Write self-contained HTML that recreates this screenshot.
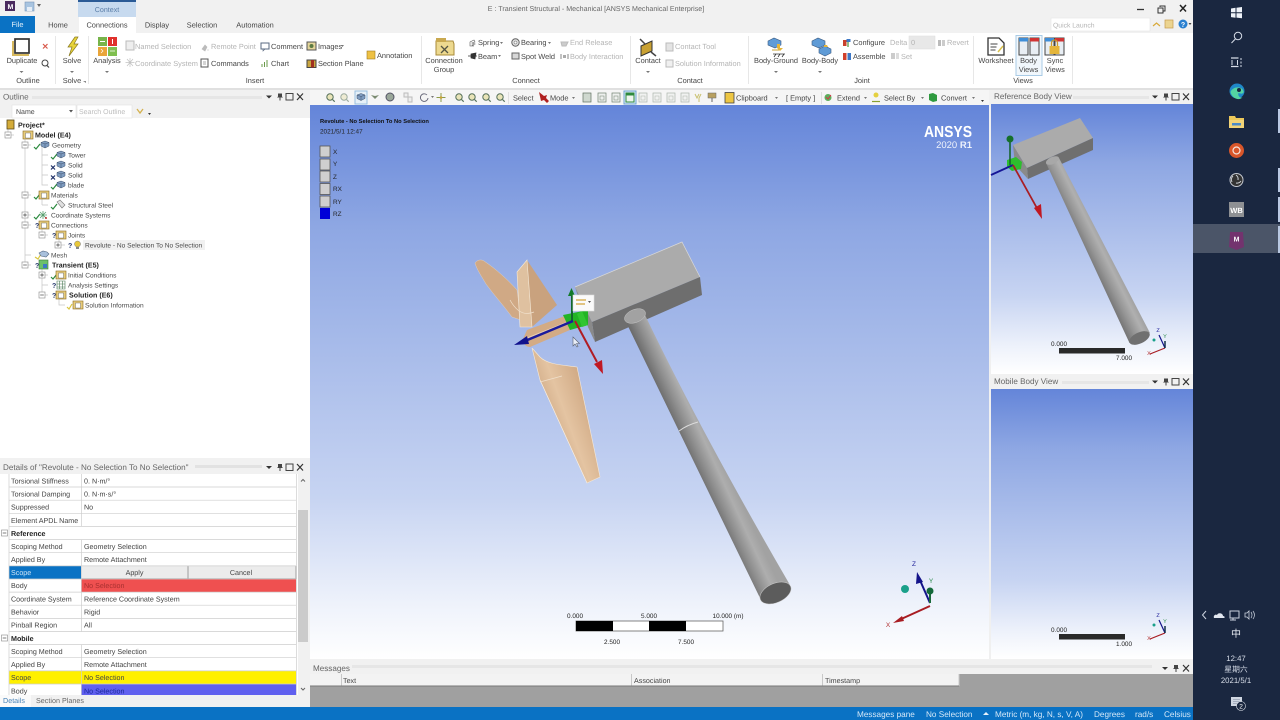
<!DOCTYPE html>
<html lang="en">
<head>
<meta charset="utf-8">
<title>E : Transient Structural - Mechanical [ANSYS Mechanical Enterprise]</title>
<style>
html,body{margin:0;padding:0;width:1280px;height:720px;overflow:hidden;background:#f0f0f0}
svg{display:block;position:absolute;left:0;top:0;filter:blur(.35px)}
text{font-family:"Liberation Sans","Noto Sans CJK SC",sans-serif;text-rendering:geometricPrecision;dominant-baseline:auto}
.r{font-size:7.4px;fill:#454545}
.g{font-size:7.4px;fill:#b4b4b4}
.c{text-anchor:middle}
.tr{font-size:6.6px;fill:#4a4a4a}
.b{font-weight:bold;fill:#222;font-size:7.1px}
.d{font-size:7.15px;fill:#444}
.h{font-size:8.1px;fill:#666}
.s{font-size:8.2px;fill:#d5e8f8}
.k{font-size:6.4px;fill:#222}
.w{fill:#fff}
</style>
</head>
<body>
<svg width="1280" height="720" viewBox="0 0 1280 720" xmlns="http://www.w3.org/2000/svg">
<defs>
<linearGradient id="vg" x1="0" y1="0" x2="0" y2="1">
<stop offset="0" stop-color="#6485d9"/><stop offset=".22" stop-color="#8ea7e3"/><stop offset=".71" stop-color="#c7d4f2"/><stop offset=".9" stop-color="#eef2fb"/><stop offset="1" stop-color="#fff"/>
</linearGradient>
<linearGradient id="cm" gradientUnits="userSpaceOnUse" x1="691" y1="461" x2="717" y2="449">
<stop offset="0" stop-color="#6c6c6c"/><stop offset=".35" stop-color="#8e8e8e"/><stop offset=".72" stop-color="#aeaeae"/><stop offset="1" stop-color="#a2a2a2"/>
</linearGradient>
<linearGradient id="cr" gradientUnits="userSpaceOnUse" x1="1086" y1="254" x2="1106" y2="244">
<stop offset="0" stop-color="#777"/><stop offset=".35" stop-color="#959595"/><stop offset=".72" stop-color="#b0b0b0"/><stop offset="1" stop-color="#a0a0a0"/>
</linearGradient>
<linearGradient id="bl" gradientUnits="userSpaceOnUse" x1="540" y1="430" x2="595" y2="410">
<stop offset="0" stop-color="#c79f79"/><stop offset=".5" stop-color="#e4c4a2"/><stop offset="1" stop-color="#cfa883"/>
</linearGradient>
<g id="bar"><path d="M-3-1h6l-3 3z" fill="#333"/><path d="M9-3h4v3l1 1h-2.500v3h-1v-3H8l1-1z" fill="#444"/><rect x="17" y="-3" width="7" height="6.500" fill="none" stroke="#444"/><path d="M28-3l6 6.500m0-6.500l-6 6.500" stroke="#333" stroke-width="1.200"/></g>
<path id="ck" d="M0 2l2 2 4-5" fill="none" stroke="#2b8a3e" stroke-width="1.200"/>
<path id="xm" d="M0 0l4 4m0-4l-4 4" fill="none" stroke="#1d2f66" stroke-width="1.200"/>
<g id="cube"><path d="M0 1.500l4-1.500 4 1.500v3.500l-4 2-4-2z" fill="#7f9cc0" stroke="#41536e" stroke-width=".5"/><path d="M0 1.500l4 1.500 4-1.500M4 3v4" fill="none" stroke="#41536e" stroke-width=".5"/></g>
<g id="fld"><rect x="0" y="1" width="10" height="8" fill="#e7cc7c" stroke="#8a6a20" stroke-width=".6"/><rect x="2.500" y="3" width="5" height="5" fill="#fff" stroke="#555" stroke-width=".4"/></g>
<g id="exp"><rect x="-3" y="-3" width="6" height="6" fill="#fff" stroke="#888" stroke-width=".6"/><path d="M-1.800 0h3.600" stroke="#444" stroke-width=".7"/></g>
<g id="exq"><rect x="-3" y="-3" width="6" height="6" fill="#fff" stroke="#888" stroke-width=".6"/><path d="M-1.800 0h3.600M0-1.800v3.600" stroke="#444" stroke-width=".7"/></g>
<g id="mag"><circle cx="4" cy="4" r="3.200" fill="#e9e4b8" stroke="#55705a" stroke-width="1"/><path d="M6.500 6.500l2.200 2.200" stroke="#55705a" stroke-width="1.200"/></g>
<g id="pg"><rect x="0" y="0" width="8" height="9" fill="#eef0ee" stroke="#70806f" stroke-width=".7"/><rect x="2" y="3" width="4" height="4" fill="none" stroke="#70806f" stroke-width=".5"/></g>
<g id="lg"><rect width="10" height="11" fill="#cfcfcf" stroke="#555" stroke-width=".8"/></g>
</defs>

<!-- title bar + tabs -->
<rect width="1193" height="33" fill="#f1f1f1"/>
<rect x="5" y="1" width="10" height="10" fill="#4a2a5e"/><text x="7.500" y="9" font-size="7" font-weight="bold" class="w">M</text>
<rect x="25" y="2" width="9" height="9" fill="#a8c4e0" stroke="#7b97b8" stroke-width=".6"/><rect x="27" y="7" width="5" height="4" fill="#e6eef7"/>
<path d="M37 4h4l-2 3z" fill="#666"/>
<text x="596" y="11" class="c" font-size="7.100" fill="#666">E : Transient Structural - Mechanical [ANSYS Mechanical Enterprise]</text>
<rect x="78" y="0" width="58" height="17" fill="#c7daef"/><rect x="78" y="0" width="58" height="2" fill="#2a5a96"/>
<text x="107" y="12" class="c" font-size="7.100" fill="#5b7ea8">Context</text>
<rect x="0" y="16" width="35" height="17" fill="#0a72c4"/><text x="17.500" y="27" class="c" font-size="7.400" fill="#e8f3fb">File</text>
<text x="58" y="27.500" class="c r">Home</text>
<rect x="79" y="17" width="57" height="17" fill="#fff"/>
<text x="107" y="27.500" class="c r">Connections</text>
<text x="157" y="27.500" class="c r">Display</text>
<text x="202" y="27.500" class="c r">Selection</text>
<text x="255" y="27.500" class="c r">Automation</text>
<path d="M1137 9.500h7" stroke="#333" stroke-width="1.300"/>
<rect x="1158" y="8" width="5" height="5" fill="none" stroke="#333"/><path d="M1160 7v-1h5v5h-1.500" fill="none" stroke="#333"/>
<path d="M1180 5l6 6.500m0-6.500l-6 6.500" stroke="#222" stroke-width="1.500"/>
<rect x="1051" y="18" width="99" height="13" fill="#fff" stroke="#e4e4e4" stroke-width=".6"/>
<text x="1053" y="27.500" font-size="6.800" fill="#b5b5b5">Quick Launch</text>
<path d="M1153 26l3.500-3 3.500 3" fill="none" stroke="#d8a938" stroke-width="1.200"/>
<rect x="1165" y="20" width="8" height="8" fill="#ecd490" stroke="#c69a4a" stroke-width=".7"/>
<circle cx="1183" cy="24" r="4.500" fill="#2a80d0"/><text x="1183" y="27" class="c w" font-size="7" font-weight="bold">?</text><path d="M1188.500 23h3l-1.500 2z" fill="#444"/>

<!-- ribbon -->
<rect y="33" width="1193" height="55" fill="#fff"/>
<rect y="88" width="1193" height="2" fill="#e0e0e0"/>
<g stroke="#e7e7e7"><path d="M55.500 36v48M88.500 36v48M421.500 36v48M630.500 36v48M748.500 36v48M973.500 36v48M1072.500 36v48"/></g>
<!-- Duplicate -->
<path d="M13 41v14h16" fill="none" stroke="#d6b85e" stroke-width="2"/><rect x="15" y="39" width="14" height="14" fill="#fff" stroke="#333" stroke-width="1.700"/>
<text x="22" y="63" class="c r">Duplicate</text><path d="M19.500 71h4l-2 2z" fill="#777"/>
<path d="M43 44l4.500 4.500m0-4.500l-4.500 4.500" stroke="#d8584a" stroke-width="1.200"/>
<circle cx="45" cy="63" r="3" fill="none" stroke="#444"/><path d="M47 65.500l2 2" stroke="#444" stroke-width="1.200"/>
<text x="28" y="83" class="c r" fill="#666">Outline</text>
<!-- Solve -->
<path d="M75 37l-7 10h4l-3 9 9-12h-4l4-7z" fill="#e8d43a" stroke="#8a7a20" stroke-width=".7"/>
<text x="72" y="63" class="c r">Solve</text><path d="M70 71h4l-2 2z" fill="#777"/>
<text x="72" y="83" class="c r" fill="#666">Solve</text><path d="M83 81h3v2z" fill="#888"/>
<!-- Analysis -->
<rect x="98" y="37" width="9" height="9" fill="#77b44a"/><rect x="108" y="37" width="9" height="9" fill="#e0312c"/><rect x="98" y="47" width="9" height="9" fill="#e9a53a"/><rect x="108" y="47" width="9" height="9" fill="#7fbf4f"/>
<path d="M100 41.500h5M112.500 39v5" stroke="#fff"/><path d="M101 49l2 2-2 2M110 51h5" stroke="#fff" fill="none" stroke-width=".7"/>
<text x="107" y="63" class="c r">Analysis</text><path d="M105 71h4l-2 2z" fill="#777"/>
<!-- Insert -->
<rect x="126" y="41" width="8" height="9" fill="#eee" stroke="#bbb"/>
<text x="135" y="49" class="g">Named Selection</text>
<path d="M130 58v9M125.500 62.500h9M127 59l6 7m0-7l-6 7" stroke="#c2c2c2" stroke-width=".7"/>
<text x="135" y="66" class="g">Coordinate System</text>
<path d="M202 49l3-4 2 2-2 4zM207 50h2" fill="#bbb" stroke="#bbb" stroke-width=".6"/>
<text x="211" y="49" class="g">Remote Point</text>
<rect x="201" y="59" width="7" height="8" fill="#fff" stroke="#555"/><path d="M203 62h3M203 64h3" stroke="#555" stroke-width=".5"/>
<text x="211" y="66" class="r">Commands</text>
<rect x="261" y="43" width="8" height="6" fill="#fff" stroke="#5a6a80"/><path d="M263 49v2l2-2" fill="none" stroke="#5a6a80" stroke-width=".6"/>
<text x="271" y="49" class="r">Comment</text>
<path d="M262 67v-3M264.500 67v-5M267 67v-7" stroke="#6a9a4a"/><text x="271" y="66" class="r">Chart</text>
<rect x="307" y="42" width="9" height="8" fill="#e4d59a" stroke="#555"/><circle cx="311.500" cy="46" r="2" fill="#5c7a42"/>
<text x="318" y="49" class="r">Images</text><path d="M341 45h3l-1.500 2z" fill="#777"/>
<rect x="307" y="60" width="9" height="7.500" fill="#caa640" stroke="#444"/><rect x="311" y="60" width="3" height="7.500" fill="#a03020"/>
<text x="318" y="66" class="r">Section Plane</text>
<rect x="367" y="51" width="8" height="8" fill="#eec144" stroke="#a07a20" stroke-width=".6"/>
<text x="377" y="58" class="r">Annotation</text>
<text x="255" y="83" class="c r" fill="#666">Insert</text>
<!-- Connect -->
<path d="M436 41h17l1 3v11h-18z" fill="#edd98f" stroke="#a88a3a"/><rect x="436" y="38" width="10" height="4" fill="#c9a950"/>
<path d="M441 46l7 7m0-7l-7 7" stroke="#554" stroke-width="1.300"/>
<text x="444" y="63" class="c r">Connection</text><text x="444" y="72" class="c r">Group</text>
<path d="M470 42l4-2 1 2-3 1 3 1-3 1 2 1h-4z" fill="none" stroke="#555" stroke-width=".6"/><text x="478" y="45" class="r">Spring</text><path d="M500 42h3l-1.500 2z" fill="#777"/>
<path d="M468 56h9M471 54l5-1-1 6-4-1z" stroke="#333" fill="#333" stroke-width=".7"/><text x="478" y="59" class="r">Beam</text><path d="M498 55h3l-1.500 2z" fill="#777"/>
<circle cx="515.500" cy="42.500" r="3.700" fill="#ddd" stroke="#666"/><circle cx="515.500" cy="42.500" r="1.500" fill="#fff" stroke="#666" stroke-width=".5"/><text x="521" y="45" class="r">Bearing</text><path d="M548 42h3l-1.500 2z" fill="#777"/>
<rect x="512" y="53" width="7" height="6" fill="#d7d7d7" stroke="#666"/><text x="521" y="59" class="r">Spot Weld</text>
<path d="M561 42h7l-2 4h-4z" fill="#ccc" stroke="#bbb"/><text x="570" y="45" class="g">End Release</text>
<path d="M561 54v5M568 54v5" stroke="#888"/><rect x="563" y="55" width="3" height="3" fill="#aaa"/><text x="570" y="59" class="g">Body Interaction</text>
<text x="526" y="83" class="c r" fill="#666">Connect</text>
<!-- Contact -->
<path d="M641 46l11-5v10l-11 5z" fill="#c9a133" stroke="#333" stroke-width="1"/><path d="M640 39l5 5M651 52l5 4" stroke="#444" stroke-width="1.500"/>
<text x="648" y="63" class="c r">Contact</text><path d="M646 71h4l-2 2z" fill="#777"/>
<rect x="666" y="43" width="7" height="8" fill="#e4e4e4" stroke="#bbb"/><text x="675" y="49" class="g">Contact Tool</text>
<rect x="666" y="60" width="7" height="7" fill="#f0f0f0" stroke="#bbb"/><text x="675" y="66" class="g">Solution Information</text>
<text x="690" y="83" class="c r" fill="#666">Contact</text>
<!-- Joint -->
<path d="M768 41l6-3 7 3v4l-6 3-7-3z" fill="#5f9bd6" stroke="#3a5a80" stroke-width=".6"/><path d="M772 50h7" stroke="#c9a133"/><path d="M777 44h3v4h3l-3 3-3-3z" fill="#e4b53a"/><path d="M773 54h12M774 57l2-3M778 57l2-3M782 57l2-3" stroke="#333" stroke-width=".8"/>
<text x="776" y="63" class="c r">Body-Ground</text><path d="M774 71h4l-2 2z" fill="#777"/>
<path d="M812 41l6-3 7 3v4l-6 3-7-3z" fill="#5f9bd6" stroke="#3a5a80" stroke-width=".6"/><path d="M819 49l6-3 6 3v4l-6 3-6-3z" fill="#5f9bd6" stroke="#3a5a80" stroke-width=".6"/><path d="M824 45h3l1 2h-4z" fill="#e4b53a"/>
<text x="820" y="63" class="c r">Body-Body</text><path d="M818 71h4l-2 2z" fill="#777"/>
<rect x="843" y="40" width="3.500" height="6" fill="#c9402c"/><rect x="846.500" y="39" width="4" height="3" fill="#3d78c6"/><path d="M848 42v5" stroke="#5a9a4a" stroke-width="1.300"/>
<text x="853" y="45" class="r">Configure</text>
<text x="890" y="45" class="g">Delta</text><rect x="909" y="36" width="26" height="13" fill="#e8e8e8" stroke="#ddd" stroke-width=".5"/><text x="911" y="45" class="g">0</text>
<rect x="938" y="40" width="3" height="6" fill="#bbb"/><rect x="942" y="40" width="3" height="6" fill="#ccc"/><text x="947" y="45" class="g">Revert</text>
<rect x="843" y="53" width="3.500" height="7" fill="#d0402c"/><rect x="847.500" y="53" width="3.500" height="7" fill="#3d78c6"/>
<text x="853" y="59" class="r">Assemble</text>
<rect x="891" y="53" width="4" height="6" fill="#ccc"/><rect x="896" y="53" width="3" height="6" fill="#ddd"/><text x="901" y="59" class="g">Set</text>
<text x="862" y="83" class="c r" fill="#666">Joint</text>
<!-- Views -->
<path d="M988 38h11l5 5v12h-16z" fill="#fff" stroke="#333" stroke-width="1.300"/><path d="M990.500 44h7M990.500 47h6M990.500 50h5" stroke="#444" stroke-width=".9"/><path d="M1003 46l-5 6" stroke="#d8c04a" stroke-width="1.500"/>
<text x="996" y="63" class="c r">Worksheet</text>
<rect x="1016" y="35.500" width="26" height="40" fill="#f1f7fc" stroke="#a9cbe6"/>
<rect x="1019" y="38" width="9" height="17" fill="#e8eef4" stroke="#444"/><rect x="1030" y="38" width="9" height="17" fill="#e8eef4" stroke="#444"/><rect x="1019" y="38" width="9" height="3.500" fill="#3f8ed8"/><rect x="1030" y="38" width="9" height="3.500" fill="#d03434"/>
<text x="1028.500" y="63" class="c r">Body</text><text x="1028.500" y="72" class="c r">Views</text>
<rect x="1045" y="38" width="9" height="17" fill="#e8eef4" stroke="#444"/><rect x="1055" y="38" width="9" height="17" fill="#e8eef4" stroke="#444"/><rect x="1045" y="38" width="9" height="3.500" fill="#3f8ed8"/><rect x="1055" y="38" width="9" height="3.500" fill="#d03434"/>
<rect x="1049.500" y="46" width="10" height="8" fill="#e4b53a"/><path d="M1051.500 46v-3a3 3 0 0 1 6 0v3" fill="none" stroke="#c9992e" stroke-width="1.300"/>
<text x="1055" y="63" class="c r">Sync</text><text x="1055" y="72" class="c r">Views</text>
<text x="1023" y="83" class="c r" fill="#666">Views</text>

<!-- Outline panel -->
<rect y="90" width="310" height="370" fill="#fff"/>
<rect y="90" width="310" height="14" fill="#f1f1f1"/>
<rect x="32" y="96" width="230" height="3" fill="#e6e6e6"/>
<text x="3" y="99.500" class="h">Outline</text>
<use href="#bar" x="269" y="96.500"/>
<rect y="104" width="310" height="14" fill="#f1f1f1"/>
<rect x="12" y="105" width="64" height="13" fill="#fff" stroke="#ddd" stroke-width=".5"/>
<text x="16" y="114" font-size="7" fill="#444">Name</text><path d="M69 110h4l-2 2.500z" fill="#555"/>
<rect x="77" y="105" width="55" height="13" fill="#fff" stroke="#ddd" stroke-width=".5"/>
<text x="79" y="114" font-size="7" fill="#bbb">Search Outline</text>
<path d="M137 109l3 4 3-4" fill="none" stroke="#d4b14e" stroke-width="1.300"/><path d="M148 113h3l-1.500 2z" fill="#333"/>

<!-- tree lines -->
<g stroke="#c5c5c5" stroke-width=".7" fill="none">
<path d="M8 125v10h6M25 135v120h6M25 265v-10M42 145v40h6M42 155h6M42 165h6M42 175h6M42 185h6M25 145h6M25 195h6M25 215h6M25 225h6M42 205h6M42 195v10M42 225v10h6M59 235v10h6M25 265h6M42 265v30h6M42 275h6M42 285h6M59 295v10h6"/>
</g>
<rect x="83" y="240" width="122" height="10" fill="#f1f1f1"/>
<!-- tree icons -->
<rect x="7" y="120" width="7" height="9" fill="#d4ac3a" stroke="#5a4a1a" stroke-width=".8"/>
<use href="#exp" x="8" y="135"/><use href="#fld" x="23" y="130"/>
<text x="18" y="127.500" class="tr b">Project*</text>
<text x="35" y="137.500" class="tr b">Model (E4)</text>
<use href="#exp" x="25" y="145"/><use href="#ck" x="34" y="145"/><use href="#cube" x="41" y="141"/><text x="52" y="147.500" class="tr">Geometry</text>
<use href="#ck" x="51" y="155"/><use href="#cube" x="57" y="151"/><text x="68" y="157.500" class="tr">Tower</text>
<use href="#xm" x="51" y="165.500"/><use href="#cube" x="57" y="161"/><text x="68" y="167.500" class="tr">Solid</text>
<use href="#xm" x="51" y="175.500"/><use href="#cube" x="57" y="171"/><text x="68" y="177.500" class="tr">Solid</text>
<use href="#ck" x="51" y="185"/><use href="#cube" x="57" y="181"/><text x="68" y="187.500" class="tr">blade</text>
<use href="#exp" x="25" y="195"/><use href="#ck" x="34" y="195"/><use href="#fld" x="39" y="190"/><text x="51" y="197.500" class="tr">Materials</text>
<use href="#ck" x="51" y="205"/><path d="M57 202l3-2 5 5-3 3z" fill="#e0e0e0" stroke="#777" stroke-width=".6"/><text x="68" y="207.500" class="tr">Structural Steel</text>
<use href="#exq" x="25" y="215"/><use href="#ck" x="34" y="215"/><path d="M43 211v8M39 215h8M40 212l6 6m0-6l-6 6" stroke="#5aa070" stroke-width=".8"/><circle cx="46" cy="218" r="1" fill="#c03030"/><text x="51" y="217.500" class="tr">Coordinate Systems</text>
<use href="#exp" x="25" y="225"/><text x="35" y="228" font-size="7" font-weight="bold" fill="#1d2f66">?</text><use href="#fld" x="39" y="220"/><text x="51" y="227.500" class="tr">Connections</text>
<use href="#exp" x="42" y="235"/><text x="52" y="238" font-size="7" font-weight="bold" fill="#1d2f66">?</text><use href="#fld" x="56" y="230"/><text x="68" y="237.500" class="tr">Joints</text>
<use href="#exq" x="58" y="245"/><text x="68" y="248" font-size="7" font-weight="bold" fill="#1d2f66">?</text><circle cx="77.500" cy="244" r="3" fill="#e9c83a" stroke="#777" stroke-width=".5"/><rect x="76" y="247" width="3" height="2" fill="#888"/><text x="85" y="247.500" class="tr">Revolute - No Selection To No Selection</text>
<path d="M35 257l3 2 3-5" fill="none" stroke="#d9c640" stroke-width="1.200"/><path d="M39 253l4-2 4 1 2 2-3 3-5-1z" fill="#a8c0dc" stroke="#556a85" stroke-width=".6"/><text x="51" y="257.500" class="tr">Mesh</text>
<use href="#exp" x="25" y="265"/><text x="35" y="268" font-size="7" font-weight="bold" fill="#1d2f66">?</text><rect x="39" y="260" width="9" height="9" fill="#6cc06a" stroke="#3a7a3a" stroke-width=".6"/><rect x="43" y="264" width="4" height="4" fill="#3d78c6"/><text x="52" y="267.500" class="tr b">Transient (E5)</text>
<use href="#exq" x="42" y="275"/><use href="#ck" x="51" y="275"/><use href="#fld" x="56" y="270"/><text x="68" y="277.500" class="tr">Initial Conditions</text>
<text x="52" y="288" font-size="7" font-weight="bold" fill="#1d2f66">?</text><path d="M57 281h8v8h-8zM59.500 281v8M62.500 281v8M57 284h8M57 287h8" fill="none" stroke="#4a7a55" stroke-width=".6"/><text x="68" y="287.500" class="tr">Analysis Settings</text>
<use href="#exp" x="42" y="295"/><text x="52" y="298" font-size="7" font-weight="bold" fill="#1d2f66">?</text><use href="#fld" x="56" y="290"/><text x="69" y="297.500" class="tr b">Solution (E6)</text>
<path d="M67 307l2 2 3-5" fill="none" stroke="#d9c640" stroke-width="1.200"/><use href="#fld" x="73" y="300"/><text x="85" y="307.500" class="tr">Solution Information</text>

<!-- Details panel -->
<rect y="458" width="310" height="249" fill="#f1f1f1"/>
<rect x="195" y="465" width="67" height="3" fill="#e2e2e2"/>
<text x="3" y="470" class="h">Details of "Revolute - No Selection To No Selection"</text>
<use href="#bar" x="269" y="467"/>
<rect x="0" y="474" width="298" height="221" fill="#fff"/>
<rect x="9" y="565.900" width="72" height="13.100" fill="#0a72c4"/>
<rect x="81" y="565.900" width="107" height="13.100" fill="#ececec"/><rect x="188" y="565.900" width="108" height="13.100" fill="#ececec"/>
<path d="M188 566v13M296 566v13M81 578.800h215" stroke="#8a8a8a" stroke-width=".8"/>
<rect x="81" y="579" width="215" height="13.100" fill="#ef5050"/>
<rect x="9" y="670.900" width="287" height="13.100" fill="#fff000"/>
<rect x="81" y="684" width="215" height="11" fill="#6060ef"/>
<g stroke="#cdcdcd" stroke-width=".7">
<path d="M9 487h287M9 500.200h287M9 513.300h287M9 526.400h287M9 539.600h287M9 552.700h287M9 565.900h287M9 579h287M9 592.100h287M9 605.200h287M9 618.400h287M9 631.500h287M9 644.600h287M9 657.700h287M9 670.900h287M9 684h287"/>
<path d="M9 474v221M81.500 474v52.400M81.500 539.600v92M81.500 644.600v50.400M296.500 474v221"/>
</g>
<g class="d">
<text x="11" y="483.500">Torsional Stiffness</text><text x="84" y="483.500">0. N·m/°</text>
<text x="11" y="496.500">Torsional Damping</text><text x="84" y="496.500">0. N·m·s/°</text>
<text x="11" y="509.500">Suppressed</text><text x="84" y="509.500">No</text>
<text x="11" y="523">Element APDL Name</text>
<text x="11" y="536" font-weight="bold" fill="#222">Reference</text>
<text x="11" y="549">Scoping Method</text><text x="84" y="549">Geometry Selection</text>
<text x="11" y="562">Applied By</text><text x="84" y="562">Remote Attachment</text>
<text x="11" y="575" fill="#cfe4f5">Scope</text>
<text x="134.500" y="575" class="c">Apply</text><text x="241" y="575" class="c">Cancel</text>
<text x="11" y="588">Body</text><text x="84" y="588" fill="#a83030">No Selection</text>
<text x="11" y="601.500">Coordinate System</text><text x="84" y="601.500">Reference Coordinate System</text>
<text x="11" y="614.500">Behavior</text><text x="84" y="614.500">Rigid</text>
<text x="11" y="627.500">Pinball Region</text><text x="84" y="627.500">All</text>
<text x="11" y="641" font-weight="bold" fill="#222">Mobile</text>
<text x="11" y="654">Scoping Method</text><text x="84" y="654">Geometry Selection</text>
<text x="11" y="667">Applied By</text><text x="84" y="667">Remote Attachment</text>
<text x="11" y="680">Scope</text><text x="84" y="680">No Selection</text>
<text x="11" y="693.500">Body</text><text x="84" y="693.500" fill="#1c2a9a">No Selection</text>
</g>
<use href="#exp" x="4.500" y="533"/><use href="#exp" x="4.500" y="638"/>
<rect x="298" y="474" width="12" height="221" fill="#f1f1f1"/>
<rect x="298" y="510" width="10" height="132" fill="#cbcbcb"/>
<path d="M301 481.500l2-2 2 2M301 688l2 2 2-2" fill="none" stroke="#666"/>
<rect y="695" width="310" height="12" fill="#f1f1f1"/><rect x="0" y="695" width="31" height="12" fill="#fafafa"/>
<text x="3" y="703" font-size="7.200" fill="#4a84b8">Details</text>
<text x="36" y="703" font-size="7.200" fill="#666">Section Planes</text>

<!-- Toolbar -->
<rect x="310" y="90" width="680" height="15" fill="#f5f5f5"/>
<use href="#mag" x="326" y="93"/>
<g opacity=".55"><use href="#mag" x="340" y="93"/></g>
<rect x="355" y="91" width="12" height="13" fill="#e6f0f8" stroke="#99bfe0"/><use href="#cube" x="357" y="93.500"/>
<path d="M371 95l4 4 4-4-4 1z" fill="#7a8a70"/>
<circle cx="390" cy="97" r="4" fill="#9aa79a" stroke="#556"/>
<rect x="404" y="93" width="4" height="4" fill="#eee" stroke="#bbb"/><rect x="408" y="97" width="4" height="5" fill="#eee" stroke="#bbb"/>
<path d="M427 95a3.800 3.800 0 1 0 1 3" fill="none" stroke="#667" stroke-width=".9"/><path d="M431 96h3l-1.500 2z" fill="#777"/>
<path d="M441 93v9M436.500 97.500h9" stroke="#8a9a4a"/><circle cx="441" cy="97.500" r="1.300" fill="#c9a133"/>
<use href="#mag" x="455" y="93"/><use href="#mag" x="468" y="93"/><use href="#mag" x="482" y="93"/><use href="#mag" x="496" y="93"/>
<path d="M508.500 92v12" stroke="#e0e0e0"/>
<text x="513" y="100.500" class="r">Select</text>
<path d="M539 92l5 4 3-1-1 3 3 3-2 2-3-3-3 1z" fill="#b02020"/>
<text x="550" y="100.500" class="r">Mode</text><path d="M572 97h3l-1.500 2z" fill="#777"/>
<rect x="583" y="93" width="8" height="9" fill="#cfd8cf" stroke="#60705f" stroke-width=".7"/>
<use href="#pg" x="598" y="93"/><use href="#pg" x="612" y="93"/>
<rect x="624" y="91" width="12" height="13" fill="#d9e9f7" stroke="#6ea3d0"/><rect x="626" y="93" width="8" height="9" fill="#eef5ee" stroke="#2e8a3e"/><rect x="626" y="93" width="8" height="2.500" fill="#2e8a3e"/>
<g opacity=".55"><use href="#pg" x="639" y="93"/><use href="#pg" x="653" y="93"/><use href="#pg" x="667" y="93"/><use href="#pg" x="681" y="93"/></g>
<path d="M695 94l2 4 2-4M701 94l-2 4v4" fill="none" stroke="#c9c070"/>
<rect x="708" y="93" width="8" height="5" fill="#b8a060" stroke="#666" stroke-width=".5"/><path d="M712 98v4" stroke="#666"/>
<rect x="725" y="92.500" width="9" height="10.500" fill="#edc643" stroke="#444" stroke-width=".8"/>
<text x="736" y="100.500" class="r">Clipboard</text><path d="M775 97h3l-1.500 2z" fill="#777"/>
<text x="786" y="100.500" class="r">[ Empty ]</text>
<path d="M821.500 92v12" stroke="#ddd"/>
<circle cx="828" cy="97.500" r="3.500" fill="#5cae5c"/><path d="M826 97l2 2 3-4" fill="none" stroke="#e24" stroke-width=".8"/>
<text x="837" y="100.500" class="r">Extend</text><path d="M864 97h3l-1.500 2z" fill="#777"/>
<circle cx="876" cy="95" r="2.500" fill="#e4d040"/><path d="M872 101.500h8" stroke="#8aa030" stroke-width="1.200"/>
<text x="884" y="100.500" class="r">Select By</text><path d="M921 97h3l-1.500 2z" fill="#777"/>
<path d="M929 94l4-1 4 2v6l-4 1-4-2z" fill="#2f9a3f"/>
<text x="941" y="100.500" class="r">Convert</text><path d="M972 97h3l-1.500 2z" fill="#777"/>
<path d="M981 100h3l-1.500 2z" fill="#333"/>

<!-- main viewport -->
<rect x="310" y="105" width="679" height="554" fill="url(#vg)"/>
<text x="320" y="123" font-size="5.750" font-weight="bold" fill="#111">Revolute - No Selection To No Selection</text>
<text x="320" y="133.500" class="k">2021/5/1 12:47</text>
<use href="#lg" x="320" y="146"/><text x="333" y="154" class="k" fill="#444">X</text>
<use href="#lg" x="320" y="159"/><text x="333" y="166" class="k" fill="#444">Y</text>
<use href="#lg" x="320" y="171"/><text x="333" y="179" class="k" fill="#444">Z</text>
<use href="#lg" x="320" y="183.500"/><text x="333" y="191" class="k" fill="#444">RX</text>
<use href="#lg" x="320" y="196"/><text x="333" y="204" class="k" fill="#444">RY</text>
<rect x="320" y="208" width="10" height="11" fill="#0000d8"/><text x="333" y="216" class="k" fill="#444">RZ</text>
<text x="972" y="137" text-anchor="end" font-size="16" font-weight="bold" class="w" textLength="48" lengthAdjust="spacingAndGlyphs">ANSYS</text>
<text x="972" y="148" text-anchor="end" font-size="9.500" fill="#eef2fb">2020 <tspan font-weight="bold">R1</tspan></text>

<!-- box main -->
<path d="M575 287L682 242 700 277 592 322z" fill="#ababab"/>
<path d="M592 322L700 277 702 295 595 342z" fill="#6e6e6e"/>
<path d="M575 287L592 322 595 342 588 327z" fill="#8a8a8a"/>
<path d="M575 287L682 242 700 277" fill="none" stroke="#d8d8d8" stroke-width=".7"/>
<!-- cylinder main -->
<path d="M625 320L760 598 790 585Q700 430 645 315z" fill="url(#cm)"/>
<ellipse cx="635" cy="316" rx="11" ry="6.500" transform="rotate(-22 635 316)" fill="#a2a2a2" stroke="#cfcfcf" stroke-width=".4"/>
<ellipse cx="775.500" cy="593" rx="16.500" ry="9.500" transform="rotate(-24 775.500 593)" fill="#5c5c5c" stroke="#cfcfcf" stroke-width=".5"/>
<path d="M679 431q8-6 19-9" stroke="#dcdcdc" fill="none"/>
<!-- blades main -->
<path d="M475 263c2-3 6-4 9-2 12 8 24 19 33 29l4 30-9-3c-8-11-18-22-26-33-4-7-9-14-11-21z" fill="#d0a985" stroke="#ead5bf" stroke-width=".4"/>
<path d="M517 272l10-12 30 45-25 22-12 0z" fill="#c9a27e"/>
<path d="M517 272l10-12 5 67-12 0z" fill="#dfc1a0" stroke="#f5ead9" stroke-width=".6"/>
<path d="M532 348l8 9c8 8 24 8 37 10l23 110-13 6-47-103z" fill="url(#bl)" stroke="#f5e9d8" stroke-width=".6"/>
<path d="M540 380l47 103" stroke="#f6ecdf" stroke-width=".6"/>
<path d="M540 382l22-6" stroke="#f0e0cc" stroke-width=".7" fill="none"/>
<path d="M527 330l46-17 4 14-47 20c-4 0-7-3-7-8z" fill="#d3ab85"/>
<path d="M527 338l46-18" stroke="#e9d0b2" stroke-width="1"/>
<path d="M510 300q10 18 24 12" stroke="#f0e0cc" stroke-width=".7" fill="none"/>
<path d="M563 315l25-5v15l-18 5z" fill="#22b424"/><path d="M582 311l6 14-6 2-5-13z" fill="#31c531"/>
<!-- triad main -->
<path d="M572 291v30" stroke="#12682a" stroke-width="2"/><path d="M568 296l3.500-8 3.500 8z" fill="#127a2a"/>
<path d="M573 321L525 341" stroke="#1b1b9c" stroke-width="2.400"/><path d="M514 345l13-9 2 8z" fill="#11118c"/>
<path d="M575 321L597 362" stroke="#b01c24" stroke-width="2"/><path d="M603 374l-9-10 8-4z" fill="#c01822"/>
<rect x="573" y="295" width="21" height="16" fill="#fafafa" stroke="#ddd" stroke-width=".6"/>
<path d="M576 300h10M576 304h9" stroke="#d2a53a" stroke-width="1.300"/><path d="M588 301h3l-1.500 2z" fill="#555"/>
<path d="M573 337v9l2-2 2 3 1-.500-1.500-3h3z" fill="#e9eef8" stroke="#5a6070" stroke-width=".6"/>

<!-- main scale -->
<text x="575" y="618" class="c k">0.000</text><text x="649" y="618" class="c k">5.000</text><text x="728" y="618" class="c k">10.000 (m)</text>
<rect x="576" y="621" width="147" height="10" fill="#fff" stroke="#666" stroke-width=".8"/>
<rect x="576" y="621" width="37" height="10" fill="#000"/><rect x="649" y="621" width="37" height="10" fill="#000"/>
<text x="612" y="644" class="c k">2.500</text><text x="686" y="644" class="c k">7.500</text>
<!-- main triad -->
<path d="M930 606L899 620" stroke="#a81c22" stroke-width="2"/><path d="M893 623l9-7 2 5z" fill="#a81c22"/>
<path d="M930 603L919 578" stroke="#14148a" stroke-width="2"/><path d="M917 572l6 10-7 2z" fill="#14148a"/>
<path d="M930 603v-12" stroke="#1a6a3a" stroke-width="2"/><circle cx="930" cy="591" r="3.500" fill="#13683a"/>
<circle cx="905" cy="589" r="4" fill="#1aa08a"/>
<text x="914" y="566" class="c" font-size="6.500" fill="#20209a">Z</text><text x="931" y="583" class="c" font-size="6.500" fill="#2a8a4a">Y</text><text x="888" y="627" class="c" font-size="6.500" fill="#b03030">X</text>

<!-- Reference body view -->
<rect x="989" y="90" width="204" height="15" fill="#f1f1f1"/>
<rect x="1073" y="96" width="76" height="3" fill="#e6e6e6"/>
<text x="994" y="99" class="h">Reference Body View</text>
<use href="#bar" x="1155" y="96.500"/>
<rect x="991" y="104" width="202" height="270" fill="url(#vg)"/>
<path d="M1013 145L1080 118 1093 138 1027 168z" fill="#ababab"/>
<path d="M1027 168L1093 138 1093 150 1028 179z" fill="#6f6f6f"/>
<path d="M1013 145L1027 168 1028 179 1015 165z" fill="#8a8a8a"/>
<path d="M1046 163L1129.500 343 1150 333 1059 158z" fill="url(#cr)"/>
<ellipse cx="1052.500" cy="160.500" rx="7" ry="3.500" transform="rotate(-24 1052.500 160.500)" fill="#a8a8a8"/>
<ellipse cx="1139.500" cy="338" rx="11" ry="5.500" transform="rotate(-25 1139.500 338)" fill="#707070"/>
<path d="M1007 160l9-3 6 5-1 7-9 2-5-4z" fill="#2dbe2d"/>
<path d="M1010 140v25" stroke="#15632b" stroke-width="1.600"/><circle cx="1010" cy="139" r="3.500" fill="#15702b"/>
<path d="M1013 165L991 175" stroke="#161696" stroke-width="1.800"/>
<path d="M1013 165L1038 210" stroke="#a91e24" stroke-width="1.800"/><path d="M1042 219l-8-11 7-4z" fill="#c01822"/>
<text x="1059" y="346" class="c k">0.000</text><rect x="1059" y="348" width="66" height="5.500" fill="#2a2a2a"/><text x="1124" y="360" class="c k">7.000</text>
<path d="M1165 348l-15 6" stroke="#a81c22" stroke-width="1.200"/><path d="M1165 348l-6-13" stroke="#14148a" stroke-width="1.200"/><path d="M1165 348v-7" stroke="#14304a" stroke-width="1.500"/><circle cx="1154" cy="340" r="1.500" fill="#1aa08a"/>
<text x="1158" y="332" class="c" font-size="5.500" fill="#20209a">Z</text><text x="1165" y="338" class="c" font-size="5.500" fill="#2a8a4a">Y</text><text x="1149" y="355" class="c" font-size="5.500" fill="#b03030">X</text>

<!-- Mobile body view -->
<rect x="989" y="374" width="204" height="15" fill="#f1f1f1"/>
<rect x="1062" y="381" width="87" height="3" fill="#e6e6e6"/>
<text x="994" y="384" class="h">Mobile Body View</text>
<use href="#bar" x="1155" y="381.500"/>
<rect x="991" y="389" width="202" height="270" fill="url(#vg)"/>
<text x="1059" y="632" class="c k">0.000</text><rect x="1059" y="634" width="66" height="5.500" fill="#2a2a2a"/><text x="1124" y="646" class="c k">1.000</text>
<path d="M1165 633l-15 6" stroke="#a81c22" stroke-width="1.200"/><path d="M1165 633l-6-13" stroke="#14148a" stroke-width="1.200"/><path d="M1165 633v-7" stroke="#14304a" stroke-width="1.500"/><circle cx="1154" cy="625" r="1.500" fill="#1aa08a"/>
<text x="1158" y="617" class="c" font-size="5.500" fill="#20209a">Z</text><text x="1165" y="623" class="c" font-size="5.500" fill="#2a8a4a">Y</text><text x="1149" y="640" class="c" font-size="5.500" fill="#b03030">X</text>

<!-- Messages -->
<rect x="310" y="659" width="883" height="15" fill="#f1f1f1"/>
<rect x="352" y="665" width="800" height="3" fill="#e6e6e6"/>
<text x="313" y="671" class="h">Messages</text>
<path d="M1162 667h6l-3 3z" fill="#333"/><path d="M1174 665h4v3l1 1h-2.500v3h-1v-3h-2.500l1-1z" fill="#444"/><path d="M1183 665l6 6.500m0-6.500l-6 6.500" stroke="#333" stroke-width="1.200"/>
<rect x="310" y="674" width="883" height="33" fill="#a0a0a0"/>
<rect x="310" y="674" width="649" height="12" fill="#f3f3f3"/>
<path d="M341.500 674v12M631.500 674v12M822.500 674v12M959 674v12" stroke="#c8c8c8"/>
<path d="M310 686h649" stroke="#777"/>
<text x="343" y="683" class="d">Text</text><text x="634" y="683" class="d">Association</text><text x="825" y="683" class="d">Timestamp</text>

<!-- status bar -->
<rect y="707" width="1193" height="13" fill="#0a72c4"/>
<g class="s">
<text x="857" y="717">Messages pane</text><text x="926" y="717">No Selection</text>
<path d="M983 715l3-3 3 3z" fill="#e8f3fb"/>
<text x="995" y="717">Metric (m, kg, N, s, V, A)</text><text x="1094" y="717">Degrees</text><text x="1135" y="717">rad/s</text><text x="1164" y="717">Celsius</text>
</g>

<!-- windows taskbar -->
<rect x="1193" y="0" width="87" height="720" fill="#1a2740"/>
<rect x="1193" y="224" width="87" height="29" fill="#4b5568"/>
<g fill="#b9c8e2"><rect x="1278" y="109" width="2" height="24"/><rect x="1278" y="168" width="2" height="24"/><rect x="1278" y="197" width="2" height="25"/><rect x="1278" y="226" width="2" height="27"/></g>
<path d="M1231 8.500l4.500-.700v4.500h-4.500zM1236.500 7.700l5.500-.700v5.300h-5.500zM1231 13.300h4.500v4.500l-4.500-.700zM1236.500 13.300h5.500v5l-5.500-.700z" fill="#eef2f8"/>
<circle cx="1238" cy="36" r="3.700" fill="none" stroke="#d7dde8"/><path d="M1235.300 39l-3.800 4" stroke="#d7dde8"/>
<path d="M1231 58h7.500M1231 66.500h7.500" stroke="#d7dde8" stroke-width="1.300"/><path d="M1232 60v5M1237.500 60v5M1241 58v2M1241 61.500v2M1241 65v2" stroke="#d7dde8" fill="none"/>
<circle cx="1237" cy="91" r="7.500" fill="#1f88c9"/><path d="M1230.500 92c2-5.500 11-6.500 13-1 1 3-3 3-5 2-1 2 1 5.500 4 4.500-3 3-10 2-12-5.500z" fill="#54d4a2"/><circle cx="1239" cy="90" r="2" fill="#1a2740"/>
<path d="M1229 116h6l1 2h8v10h-15z" fill="#ecc85a"/><rect x="1229" y="120" width="15" height="8" fill="#f2d478"/><rect x="1232" y="123" width="9" height="2.500" fill="#4a8ac8"/>
<circle cx="1236.500" cy="150.500" r="7.500" fill="#d8562a"/><circle cx="1236.500" cy="150.500" r="3.500" fill="none" stroke="#f5e4dc" stroke-width="1.200"/>
<circle cx="1236.500" cy="180" r="6.500" fill="#333" stroke="#c5c9d0"/><path d="M1236 175a5 5 0 0 1 2 5M1241 181a5 5 0 0 1-5 2M1232 182a5 5 0 0 1 1-6" stroke="#d0d4da" fill="none"/>
<rect x="1229" y="202" width="15" height="15" fill="#8e9093"/><text x="1236.500" y="213" class="c w" font-size="7.500" font-weight="bold">WB</text>
<path d="M1230 232h13l1 15-7.500 3-7.500-3z" fill="#73336e"/><text x="1236.500" y="241.500" class="c w" font-size="7" font-weight="bold">M</text>
<path d="M1206 611l-3.500 4 3.500 4" fill="none" stroke="#ccd3df"/>
<path d="M1214 618c-1-3 2-4 3-3 1-3 6-2 6 1 2 0 2 2 1 2z" fill="#e2e7f0"/>
<rect x="1230" y="611" width="9" height="7" fill="none" stroke="#ccd3df"/><path d="M1233 618v2M1230 620h6" stroke="#ccd3df"/>
<path d="M1245 613h2l2-2v8l-2-2h-2z" fill="none" stroke="#ccd3df" stroke-width=".8"/><path d="M1251 612q2 3 0 6M1253 611q3 4 0 8" fill="none" stroke="#ccd3df" stroke-width=".7"/>
<text x="1236" y="637" class="c" font-size="10" fill="#e8ecf3">中</text>
<text x="1236" y="661" class="c" font-size="7.800" fill="#d7dde8">12:47</text>
<text x="1236" y="672" class="c" font-size="7.800" fill="#d7dde8">星期六</text>
<text x="1236" y="683" class="c" font-size="7.800" fill="#d7dde8">2021/5/1</text>
<rect x="1231" y="697" width="11" height="9" fill="#cfd6e2"/><path d="M1233 699.500h7M1233 701.500h7M1233 703.500h5" stroke="#7a8499" stroke-width=".6"/><circle cx="1241" cy="706" r="4.500" fill="#1a2740" stroke="#dde2ea" stroke-width=".6"/><text x="1241" y="708.500" class="c w" font-size="6.500">2</text>
</svg>
</body>
</html>
